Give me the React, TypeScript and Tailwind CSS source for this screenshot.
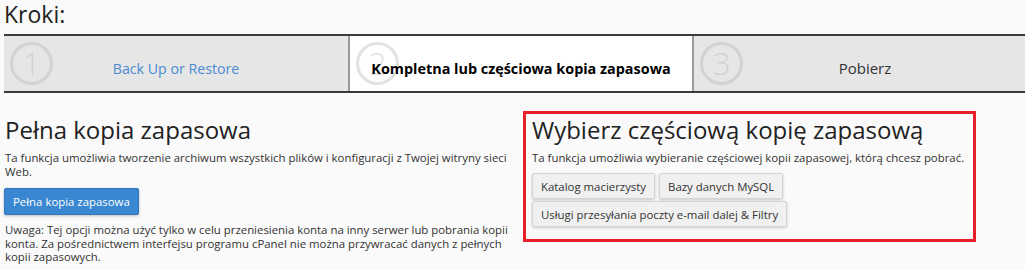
import React from 'react';

// Steps of the backup wizard
const steps = [
  { id: 1, label: 'Back Up or Restore', state: 'link' },
  { id: 2, label: 'Kompletna lub częściowa kopia zapasowa', state: 'active' },
  { id: 3, label: 'Pobierz', state: 'idle' },
];

const partialButtons = [
  'Katalog macierzysty',
  'Bazy danych MySQL',
  'Usługi przesyłania poczty e-mail dalej & Filtry',
];

const App = () => {
  return (
    <div className="w-[1025px] h-[270px] overflow-hidden bg-[#fafafa] px-1 font-['Open_Sans',sans-serif] text-[#333]">
      <h2 className="text-[23px] leading-[28px] text-[#222]">Kroki:</h2>

      {/* Steps bar */}
      <div className="mt-[6px] flex w-[1032px] border-y-2 border-[#3a3a3a]">
        {steps.map((step) => (
          <div
            key={step.id}
            className={`relative w-[344px] h-[55px] flex items-center justify-center pt-[10px] ${step.id > 1 ? 'border-l-2 border-[#9a9a9a]' : ''} ${step.state === 'active' ? 'bg-white' : 'bg-[#e6e6e6]'}`}
          >
            <div
              className={`absolute left-[6px] top-[6px] w-[43px] h-[43px] rounded-full border-[3px] flex items-center justify-center text-[31px] font-light leading-none ${step.state === 'active' ? 'border-[#e2e2e2] text-[#e2e2e2]' : 'border-[#d2d2d2] text-[#d2d2d2]'}`}
            >
              {step.id}
            </div>
            <span
              className={`relative ${step.state === 'link' ? 'text-[14.2px] text-[#4a8bd4]' : ''} ${step.state === 'active' ? 'font-bold text-black text-[14.4px]' : ''} ${step.state === 'idle' ? 'text-[15px] text-[#333]' : ''}`}
            >
              {step.label}
            </span>
          </div>
        ))}
      </div>

      {/* Sections */}
      <div className="mt-[18px] flex items-start">
        {/* Full backup */}
        <div className="w-[508px] pt-[6px] pl-[1px]">
          <h2 className="text-[24px] leading-[26px] text-[#222]">Pełna kopia zapasowa</h2>
          <p className="mt-[8px] text-[11.4px] leading-[14.4px]">
            Ta funkcja umożliwia tworzenie archiwum wszystkich plików i konfiguracji z Twojej witryny sieci Web.
          </p>
          <button className="mt-[8px] -ml-[1px] h-[27px] px-[8px] rounded-[2px] bg-[#3a87d1] border border-[#2f78bd] text-white text-[11.4px] shadow-[0_1px_3px_rgba(0,0,0,0.25)]">
            Pełna kopia zapasowa
          </button>
          <p className="mt-[8px] text-[11.4px] leading-[13.8px]">
            Uwaga: Tej opcji można użyć tylko w celu przeniesienia konta na inny serwer lub pobrania kopii konta. Za pośrednictwem interfejsu programu cPanel nie można przywracać danych z pełnych kopii zapasowych.
          </p>
        </div>

        {/* Partial backup */}
        <div className="ml-[11px] w-[453px] border-[3px] border-[#e8202a] pt-[3px] pl-[6px] pr-[4px] pb-[12px]">
          <h2 className="text-[24px] leading-[26px] text-[#222]">Wybierz częściową kopię zapasową</h2>
          <p className="mt-[8px] text-[11.4px] leading-[14.4px]">
            Ta funkcja umożliwia wybieranie częściowej kopii zapasowej, którą chcesz pobrać.
          </p>
          <div className="mt-[8px] flex flex-wrap gap-x-[4px] gap-y-[2px]">
            {partialButtons.map((label) => (
              <button
                key={label}
                className="h-[26px] px-[8px] rounded-[2px] bg-[#f0f0f0] border border-[#d4d4d4] text-[11.4px] text-[#333] shadow-[0_1px_3px_rgba(0,0,0,0.2)]"
              >
                {label}
              </button>
            ))}
          </div>
        </div>
      </div>
    </div>
  );
};

export default App;
